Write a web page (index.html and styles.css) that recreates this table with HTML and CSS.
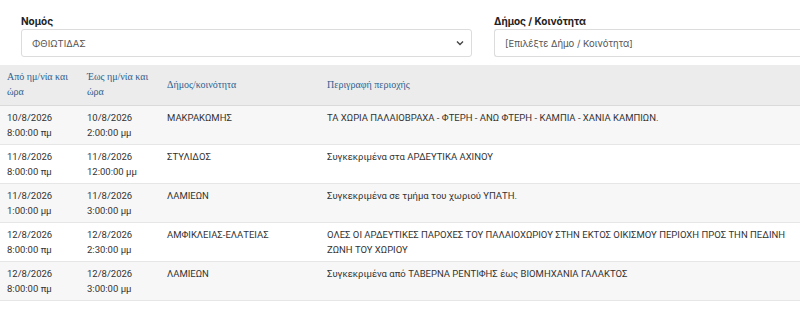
FILE: index.html
```html
<!DOCTYPE html>
<html lang="el">
<head>
<meta charset="utf-8">
<link rel="stylesheet" href="styles.css">
</head>
<body>
<div class="filters">
  <div class="field">
    <div class="label">Νομός</div>
    <div class="select">
      <span>ΦΘΙΩΤΙΔΑΣ</span>
      <svg class="chev" width="8" height="6" viewBox="0 0 8 6"><path d="M1 1.5 L4 4.5 L7 1.5" fill="none" stroke="#444" stroke-width="1.4"/></svg>
    </div>
  </div>
  <div class="field">
    <div class="label">Δήμος / Κοινότητα</div>
    <div class="select select-cut">
      <span>[Επιλέξτε Δήμο / Κοινότητα]</span>
    </div>
  </div>
</div>
<table class="grid">
  <colgroup>
    <col class="c1"><col class="c2"><col class="c3"><col class="c4">
  </colgroup>
  <thead>
    <tr>
      <th>Από ημ/νία και ώρα</th>
      <th>Έως ημ/νία και ώρα</th>
      <th>Δήμος/κοινότητα</th>
      <th>Περιγραφή περιοχής</th>
    </tr>
  </thead>
  <tbody>
    <tr>
      <td>10/8/2026<br>8:00:00 πμ</td>
      <td>10/8/2026<br>2:00:00 μμ</td>
      <td>ΜΑΚΡΑΚΩΜΗΣ</td>
      <td>ΤΑ ΧΩΡΙΑ ΠΑΛΑΙΟΒΡΑΧΑ - ΦΤΕΡΗ - ΑΝΩ ΦΤΕΡΗ - ΚΑΜΠΙΑ - ΧΑΝΙΑ ΚΑΜΠΙΩΝ.</td>
    </tr>
    <tr>
      <td>11/8/2026<br>8:00:00 πμ</td>
      <td>11/8/2026<br>12:00:00 μμ</td>
      <td>ΣΤΥΛΙΔΟΣ</td>
      <td>Συγκεκριμένα στα ΑΡΔΕΥΤΙΚΑ ΑΧΙΝΟΥ</td>
    </tr>
    <tr>
      <td>11/8/2026<br>1:00:00 μμ</td>
      <td>11/8/2026<br>3:00:00 μμ</td>
      <td>ΛΑΜΙΕΩΝ</td>
      <td>Συγκεκριμένα σε τμήμα του χωριού ΥΠΑΤΗ.</td>
    </tr>
    <tr>
      <td>12/8/2026<br>8:00:00 πμ</td>
      <td>12/8/2026<br>2:30:00 μμ</td>
      <td>ΑΜΦΙΚΛΕΙΑΣ-ΕΛΑΤΕΙΑΣ</td>
      <td>ΟΛΕΣ ΟΙ ΑΡΔΕΥΤΙΚΕΣ ΠΑΡΟΧΕΣ ΤΟΥ ΠΑΛΑΙΟΧΩΡΙΟΥ ΣΤΗΝ ΕΚΤΟΣ ΟΙΚΙΣΜΟΥ ΠΕΡΙΟΧΗ ΠΡΟΣ ΤΗΝ ΠΕΔΙΝΗ ΖΩΝΗ ΤΟΥ ΧΩΡΙΟΥ</td>
    </tr>
    <tr>
      <td>12/8/2026<br>8:00:00 πμ</td>
      <td>12/8/2026<br>3:00:00 μμ</td>
      <td>ΛΑΜΙΕΩΝ</td>
      <td>Συγκεκριμένα από ΤΑΒΕΡΝΑ ΡΕΝΤΙΦΗΣ έως ΒΙΟΜΗΧΑΝΙΑ ΓΑΛΑΚΤΟΣ</td>
    </tr>
  </tbody>
</table>
</body>
</html>
```

FILE: styles.css
```css
html, body {
  margin: 0;
  padding: 0;
  background: #fff;
  overflow: hidden;
}
body {
  width: 800px;
  font-family: "Inter", "Noto Sans", sans-serif;
}
.filters {
  display: grid;
  grid-template-columns: 451px 1fr;
  column-gap: 22px;
  padding: 14px 0 0 21px;
}
.label {
  font-size: 10px;
  font-weight: 700;
  color: #222;
  line-height: 14px;
  margin-bottom: 1px;
}
.select {
  height: 28px;
  box-sizing: border-box;
  border: 1px solid #dcdcdc;
  border-radius: 3px;
  display: flex;
  align-items: center;
  justify-content: space-between;
  padding: 0 7px 0 10px;
  font-size: 9.5px;
  color: #555;
}
.select-cut {
  border-right: none;
  border-top-right-radius: 0;
  border-bottom-right-radius: 0;
}
.chev {
  display: block;
}
.grid {
  margin-top: 8px;
  width: 800px;
  border-collapse: collapse;
  table-layout: fixed;
}
.c1 { width: 80px; }
.c2 { width: 80px; }
.c3 { width: 160px; }
.c4 { width: 480px; }
.grid th {
  background: #ececec;
  font-family: "Liberation Serif", "DejaVu Serif", serif;
  font-weight: 400;
  font-size: 10px;
  color: #2f5f8e;
  text-align: left;
  line-height: 15px;
  height: 40px;
  box-sizing: border-box;
  padding: 3px 7px 4px 7px;
  vertical-align: middle;
  border-bottom: 1px solid #dadada;
}
.grid td {
  font-family: "Roboto", "Noto Sans", sans-serif;
  font-size: 9.5px;
  color: #333;
  line-height: 15px;
  padding: 4px 7px 4px 7px;
  vertical-align: top;
  border-bottom: 1px solid #e6e6e6;
}
.grid tbody tr:nth-child(odd) td {
  background: #f7f7f7;
}
.grid tbody tr:nth-child(even) td {
  background: #fff;
}
```
